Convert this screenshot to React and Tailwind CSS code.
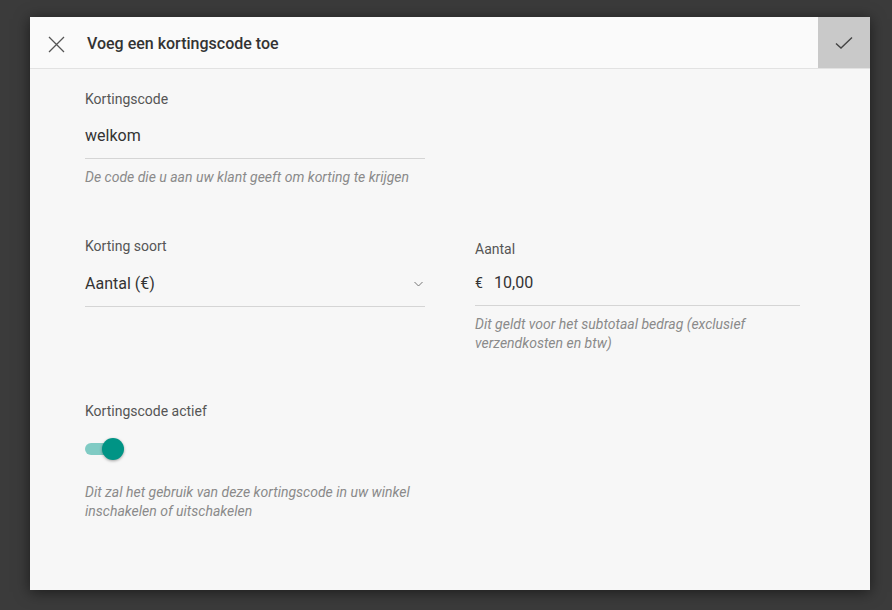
import React from 'react'

const Field = ({ label, children, hint, width, labelGap = 'mt-[16px]' }) => (
    <div style={{ width }} className="flex flex-col">
        <div className="text-[14px] leading-4 text-[#555]">{label}</div>
        <div className={`${labelGap} border-b border-[#d5d5d5] pb-[12px]`}>{children}</div>
        {hint && (
            <div className="mt-[9px] text-[14px] leading-[19px] italic text-[#8a8a8a]">{hint}</div>
        )}
    </div>
)

const App = () => {
    return (
        <div className="h-[610px] w-[892px] bg-[#3b3b3b] pt-[17px] pl-[30px]" style={{ fontFamily: 'Roboto, "Noto Sans", sans-serif' }}>
            <div className="flex h-[573px] w-[840px] flex-col bg-[#f7f7f7] shadow-[0_2px_14px_rgba(0,0,0,0.55)]">
                {/* Header */}
                <div className="flex h-[52px] items-stretch border-b border-[#e2e2e2] bg-[#fafafa]">
                    <button className="flex w-[57px] items-center justify-end pr-[22px] pt-[3px]">
                        <svg width="17" height="17" viewBox="0 0 17 17" fill="none" stroke="#555" strokeWidth="1.3">
                            <path d="M1 1 L16 16 M16 1 L1 16" />
                        </svg>
                    </button>
                    <div className="flex flex-1 items-center pt-[3px] text-[16px] font-medium text-[#333]">
                        Voeg een kortingscode toe
                    </div>
                    <button className="flex w-[52px] items-center justify-center bg-[#c9c9c9] pt-[1px]">
                        <svg width="18" height="14" viewBox="0 0 18 14" fill="none" stroke="#444" strokeWidth="1.4">
                            <path d="M1 7.5 L6 12 L17 1.5" />
                        </svg>
                    </button>
                </div>

                {/* Body */}
                <div className="flex flex-col pl-[55px] pt-[22px]">
                    <Field
                        label="Kortingscode"
                        width={340}
                        hint="De code die u aan uw klant geeft om korting te krijgen"
                        labelGap="mt-[19px]"
                    >
                        <div className="text-[16px] leading-5 text-[#333]">welkom</div>
                    </Field>

                    <div className="mt-[51px] flex gap-[50px]">
                        <Field label="Korting soort" width={340} labelGap="mt-[20px]">
                            <div className="flex items-center justify-between pr-[2px]">
                                <span className="text-[16px] leading-5 text-[#333]">Aantal (€)</span>
                                <svg width="9" height="6" viewBox="0 0 9 6" fill="none" stroke="#777" strokeWidth="1">
                                    <path d="M0.5 1 L4.5 5 L8.5 1" />
                                </svg>
                            </div>
                        </Field>
                        <div className="pt-[3px]">
                            <Field
                                label="Aantal"
                                width={325}
                                labelGap="mt-[16px]"
                                hint="Dit geldt voor het subtotaal bedrag (exclusief verzendkosten en btw)"
                            >
                                <div className="flex items-center text-[#333]">
                                    <span className="w-[19px] text-[14px] leading-5">€</span>
                                    <span className="text-[16px] leading-5">10,00</span>
                                </div>
                            </Field>
                        </div>
                    </div>

                    <div className="mt-[50px] flex w-[340px] flex-col">
                        <div className="text-[14px] leading-4 text-[#555]">Kortingscode actief</div>
                        {/* Toggle */}
                        <div className="relative mt-[19px] h-[22px] w-[40px]">
                            <div className="absolute left-0 top-[5px] h-[12px] w-[30px] rounded-full bg-[#80cbc4]" />
                            <div className="absolute left-[17px] top-0 h-[22px] w-[22px] rounded-full bg-[#009485] shadow-[0_1px_3px_rgba(0,0,0,0.35)]" />
                        </div>
                        <div className="mt-[23px] text-[14px] leading-[19px] italic text-[#8a8a8a]">
                            Dit zal het gebruik van deze kortingscode in uw winkel inschakelen of uitschakelen
                        </div>
                    </div>
                </div>
            </div>
        </div>
    )
}

export default App
